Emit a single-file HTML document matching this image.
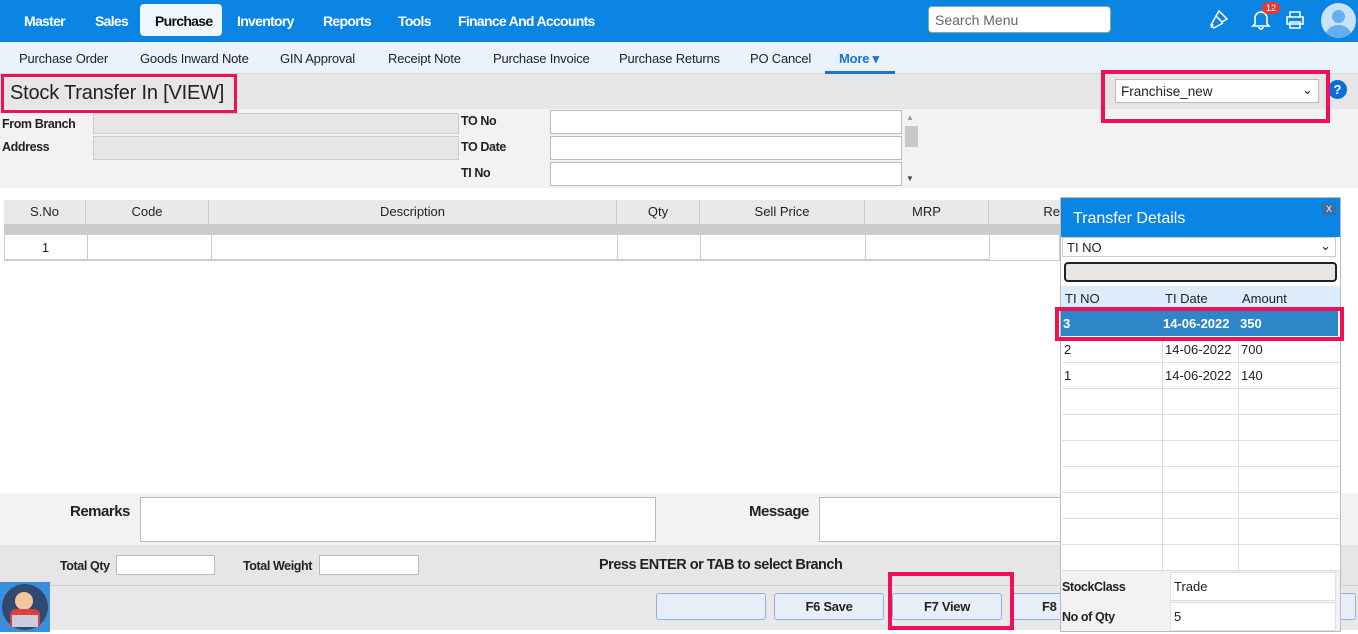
<!DOCTYPE html>
<html><head><meta charset="utf-8"><style>
*{box-sizing:border-box;margin:0;padding:0}
body{width:1358px;height:634px;overflow:hidden;font-family:"Liberation Sans",sans-serif;background:#fff;position:relative;font-size:13px;color:#222}
.abs{position:absolute}
.nav{left:0;top:0;width:1358px;height:42px;background:#0b85e3}
.nav span{position:absolute;top:13px;color:#fff;font-weight:bold;font-size:14px;letter-spacing:-0.7px}
.sub{left:0;top:42px;width:1358px;height:32px;background:#eaf3fc;border-bottom:1px solid #d8d8d8}
.sub span{position:absolute;top:9px;font-size:13px;color:#222;letter-spacing:-0.2px}
.lbl{font-size:12.5px;font-weight:bold;color:#222;letter-spacing:-0.4px}
.inp{background:#fff;border:1px solid #bbb}
.th{position:absolute;top:200px;height:24px;border-right:1px solid #ccc;text-align:center;font-size:13px;line-height:24px;color:#222}
.td{position:absolute;top:235px;height:25px;border-right:1px solid #ccc;border-bottom:1px solid #ccc}
.pink{border:4px solid #f0105a;position:absolute}
.btn{position:absolute;top:593px;height:27px;background:#e8eef7;border:1px solid #8ab4e8;border-radius:3px;text-align:center;line-height:26px;font-size:13px;font-weight:bold;letter-spacing:-0.3px}
.pr{position:absolute;left:1062px;width:277px;height:26px;border-bottom:1px solid #ddd;font-size:13px}
.pr div{position:absolute;top:0;height:26px;line-height:26px;border-right:1px solid #ddd}
</style></head><body>
<div class="abs nav">
<span style="left:24px">Master</span><span style="left:95px">Sales</span>
<div class="abs" style="left:140px;top:4px;width:82px;height:32px;background:#eef6fe;border-radius:4px"></div>
<span style="left:155px;color:#111">Purchase</span>
<span style="left:237px">Inventory</span><span style="left:323px">Reports</span><span style="left:398px">Tools</span><span style="left:458px">Finance And Accounts</span>
<div class="abs" style="left:928px;top:6px;width:183px;height:27px;background:#fff;border:1px solid #8a8;border-radius:4px;font-size:14px;color:#666;padding:5px 6px;font-weight:normal">Search Menu</div>
<svg class="abs" style="left:1207px;top:8px" width="24" height="24" viewBox="0 0 24 24" fill="none" stroke="#fff" stroke-width="1.5"><path d="M12 3l8 8-5 3-6-6z M9 8l-5 9 3 3 9-5 M6 16l-2 4"/></svg>
<svg class="abs" style="left:1250px;top:8px" width="22" height="22" viewBox="0 0 22 22" fill="none" stroke="#fff" stroke-width="1.6"><path d="M5 16V10a6 6 0 0112 0v6l2 2H3z M9 19a2 2 0 004 0"/></svg>
<div class="abs" style="left:1262px;top:2px;width:18px;height:12px;background:#e53935;border-radius:6px;color:#fff;font-size:9px;text-align:center;line-height:12px">12</div>
<svg class="abs" style="left:1285px;top:10px" width="20" height="20" viewBox="0 0 20 20" fill="none" stroke="#fff" stroke-width="1.6"><path d="M5 7V2h10v5 M2 7h16v7H2z M5 12h10v6H5z"/></svg>
<div class="abs" style="left:1321px;top:3px;width:35px;height:35px;border-radius:50%;background:#c8e2fa;overflow:hidden"><div class="abs" style="left:11px;top:7px;width:13px;height:13px;border-radius:50%;background:#64aef0"></div><div class="abs" style="left:5px;top:22px;width:25px;height:20px;border-radius:50%;background:#64aef0"></div></div>
</div>
<div class="abs sub">
<span style="left:19px">Purchase Order</span><span style="left:140px">Goods Inward Note</span><span style="left:280px">GIN Approval</span><span style="left:388px">Receipt Note</span><span style="left:493px">Purchase Invoice</span><span style="left:619px">Purchase Returns</span><span style="left:750px">PO Cancel</span>
<span style="left:839px;color:#1a73d9;font-weight:bold">More ▾</span>
<div class="abs" style="left:825px;top:29px;width:70px;height:3px;background:#1a73d9"></div>
</div>
<div class="abs" style="left:0;top:74px;width:1358px;height:35px;background:#e6e6e6"></div>
<div class="abs" style="left:10px;top:82px;font-size:20px;color:#222;letter-spacing:-0.2px">Stock Transfer In [VIEW]</div>
<div class="abs" style="left:1115px;top:79px;width:204px;height:24px;background:#fff;border:1px solid #bbb;font-size:13.5px;padding:4px 5px">Franchise_new<span style="position:absolute;right:5px;top:2px;font-size:13px">⌄</span></div>
<div class="abs" style="left:1328px;top:80px;width:19px;height:19px;border-radius:50%;background:#0b6fd6;color:#fff;font-weight:bold;text-align:center;line-height:19px;font-size:13px">?</div>
<div class="abs" style="left:0;top:109px;width:1358px;height:79px;background:#f2f2f2"></div>
<div class="abs lbl" style="left:2px;top:117px">From Branch</div>
<div class="abs lbl" style="left:2px;top:140px">Address</div>
<div class="abs" style="left:93px;top:113px;width:366px;height:21px;background:#e6e6e6;border:1px solid #ccc"></div>
<div class="abs" style="left:93px;top:136px;width:366px;height:24px;background:#e6e6e6;border:1px solid #ccc"></div>
<div class="abs lbl" style="left:461px;top:114px">TO No</div>
<div class="abs lbl" style="left:461px;top:140px">TO Date</div>
<div class="abs lbl" style="left:461px;top:166px">TI No</div>
<div class="abs inp" style="left:550px;top:110px;width:352px;height:24px"></div>
<div class="abs inp" style="left:550px;top:136px;width:352px;height:24px"></div>
<div class="abs inp" style="left:550px;top:162px;width:352px;height:24px"></div>
<div class="abs" style="left:905px;top:126px;width:13px;height:21px;background:#c8c8c8"></div>
<div class="abs" style="left:906px;top:113px;font-size:8px;color:#999">▲</div>
<div class="abs" style="left:906px;top:174px;font-size:8px;color:#444">▼</div>
<div class="abs" style="left:4px;top:200px;width:1056px;height:24px;background:#e9e9e9"></div>
<div class="abs" style="left:4px;top:224px;width:1056px;height:11px;background:#ccc"></div>
<div class="th" style="left:4px;width:82px">S.No</div><div class="th" style="left:86px;width:123px">Code</div><div class="th" style="left:209px;width:408px">Description</div><div class="th" style="left:617px;width:83px">Qty</div><div class="th" style="left:700px;width:165px">Sell Price</div><div class="th" style="left:865px;width:124px">MRP</div><div class="th" style="left:989px;width:71px;text-align:right;border:0">Re</div>
<div class="abs" style="left:4px;top:235px;width:1056px;height:26px;border:1px solid #ccc;border-top:0"></div>
<div class="td" style="left:4px;width:84px;text-align:center;line-height:25px">1</div><div class="td" style="left:88px;width:124px"></div><div class="td" style="left:212px;width:406px"></div><div class="td" style="left:618px;width:83px"></div><div class="td" style="left:701px;width:165px"></div><div class="td" style="left:866px;width:124px"></div>
<div class="abs" style="left:0;top:493px;width:1358px;height:52px;background:#f2f2f2"></div>
<div class="abs" style="left:70px;top:503px;font-size:15px;font-weight:bold;letter-spacing:-0.5px">Remarks</div>
<div class="abs inp" style="left:140px;top:497px;width:516px;height:45px"></div>
<div class="abs" style="left:749px;top:503px;font-size:15px;font-weight:bold;letter-spacing:-0.5px">Message</div>
<div class="abs inp" style="left:819px;top:497px;width:250px;height:45px"></div>
<div class="abs" style="left:0;top:545px;width:1358px;height:40px;background:#e6e6e6"></div>
<div class="abs lbl" style="left:60px;top:559px">Total Qty</div><div class="abs inp" style="left:116px;top:555px;width:99px;height:20px"></div>
<div class="abs lbl" style="left:243px;top:559px">Total Weight</div><div class="abs inp" style="left:319px;top:555px;width:100px;height:20px"></div>
<div class="abs" style="left:599px;top:557px;font-size:14.5px;font-weight:bold;letter-spacing:-0.5px">Press ENTER or TAB to select Branch</div>
<div class="abs" style="left:0;top:585px;width:1358px;height:45px;background:#e8e8e8;border-top:1px solid #d0d0d0"></div>
<div class="abs" style="left:0;top:582px;width:50px;height:50px;background:#3a8fdd"><div class="abs" style="left:2px;top:2px;width:46px;height:46px;border-radius:50%;background:#2f4a6e"></div><div class="abs" style="left:15px;top:10px;width:18px;height:18px;border-radius:50%;background:#f2c7a0"></div><div class="abs" style="left:10px;top:27px;width:30px;height:18px;background:#d94040;border-radius:6px 6px 0 0"></div><div class="abs" style="left:12px;top:33px;width:26px;height:12px;background:#ccd"></div></div>
<div class="btn" style="left:656px;width:110px"></div>
<div class="btn" style="left:774px;width:110px">F6 Save</div>
<div class="btn" style="left:892px;width:110px">F7 View</div>
<div class="btn" style="left:1010px;width:80px;text-align:left;padding-left:31px">F8</div>
<div class="btn" style="left:1330px;width:26px"></div>
<!-- popup -->
<div class="abs" style="left:1060px;top:197px;width:281px;height:435px;background:#fff;border:1px solid #bbb"></div>
<div class="abs" style="left:1061px;top:198px;width:279px;height:39px;background:#0b85e3;color:#fff;font-size:16px;padding:12px 0 0 12px">Transfer Details</div>
<div class="abs" style="left:1322px;top:203px;width:14px;height:12px;background:#3a6ea5;color:#fff;font-size:9px;text-align:center;line-height:12px">X</div>
<div class="abs" style="left:1062px;top:237px;width:274px;height:20px;border:1px solid #ccc;font-size:13px;padding:2px 4px">TI NO<span style="position:absolute;right:4px;top:0">⌄</span></div>
<div class="abs" style="left:1064px;top:262px;width:273px;height:20px;background:#e6e6e6;border:2px solid #222;border-radius:4px"></div>
<div class="abs" style="left:1061px;top:286px;width:279px;height:24px;background:#dcecfa"></div>
<div class="abs" style="left:1065px;top:291px;font-size:13px">TI NO</div><div class="abs" style="left:1165px;top:291px;font-size:13px">TI Date</div><div class="abs" style="left:1242px;top:291px;font-size:13px">Amount</div>
<div class="abs" style="left:1061px;top:311px;width:277px;height:25px;background:#2e86c8;color:#fff;font-weight:bold;font-size:13px;line-height:25px"><span class="abs" style="left:2px">3</span><span class="abs" style="left:102px">14-06-2022</span><span class="abs" style="left:179px">350</span></div>
<div class="pr" style="top:337px"><div style="left:0;width:101px;padding-left:2px">2</div><div style="left:101px;width:76px;padding-left:2px">14-06-2022</div><div style="left:177px;width:100px;padding-left:2px;border:0">700</div></div>
<div class="pr" style="top:363px"><div style="left:0;width:101px;padding-left:2px">1</div><div style="left:101px;width:76px;padding-left:2px">14-06-2022</div><div style="left:177px;width:100px;padding-left:2px;border:0">140</div></div>
<div class="pr" style="top:389px"><div style="left:0;width:101px"></div><div style="left:101px;width:76px"></div></div>
<div class="pr" style="top:415px"><div style="left:0;width:101px"></div><div style="left:101px;width:76px"></div></div>
<div class="pr" style="top:441px"><div style="left:0;width:101px"></div><div style="left:101px;width:76px"></div></div>
<div class="pr" style="top:467px"><div style="left:0;width:101px"></div><div style="left:101px;width:76px"></div></div>
<div class="pr" style="top:493px"><div style="left:0;width:101px"></div><div style="left:101px;width:76px"></div></div>
<div class="pr" style="top:519px"><div style="left:0;width:101px"></div><div style="left:101px;width:76px"></div></div>
<div class="pr" style="top:545px;height:26px"><div style="left:0;width:101px"></div><div style="left:101px;width:76px"></div></div>
<div class="abs" style="left:1061px;top:571px;width:279px;height:60px;background:#f2f2f2"></div>
<div class="abs lbl" style="left:1062px;top:580px;font-weight:bold">StockClass</div>
<div class="abs" style="left:1170px;top:572px;width:166px;height:29px;background:#fff;border:1px solid #e0e0e0;font-size:13px;padding:6px 3px">Trade</div>
<div class="abs lbl" style="left:1062px;top:610px">No of Qty</div>
<div class="abs" style="left:1170px;top:602px;width:166px;height:29px;background:#fff;border:1px solid #e0e0e0;font-size:13px;padding:6px 3px">5</div>
<!-- highlight boxes on top -->
<div class="pink" style="left:1px;top:74px;width:236px;height:39px;border-width:3px"></div>
<div class="pink" style="left:1101px;top:70px;width:229px;height:53px"></div>
<div class="pink" style="left:1055px;top:307px;width:289px;height:34px"></div>
<div class="pink" style="left:888px;top:572px;width:126px;height:58px"></div>
</body></html>
